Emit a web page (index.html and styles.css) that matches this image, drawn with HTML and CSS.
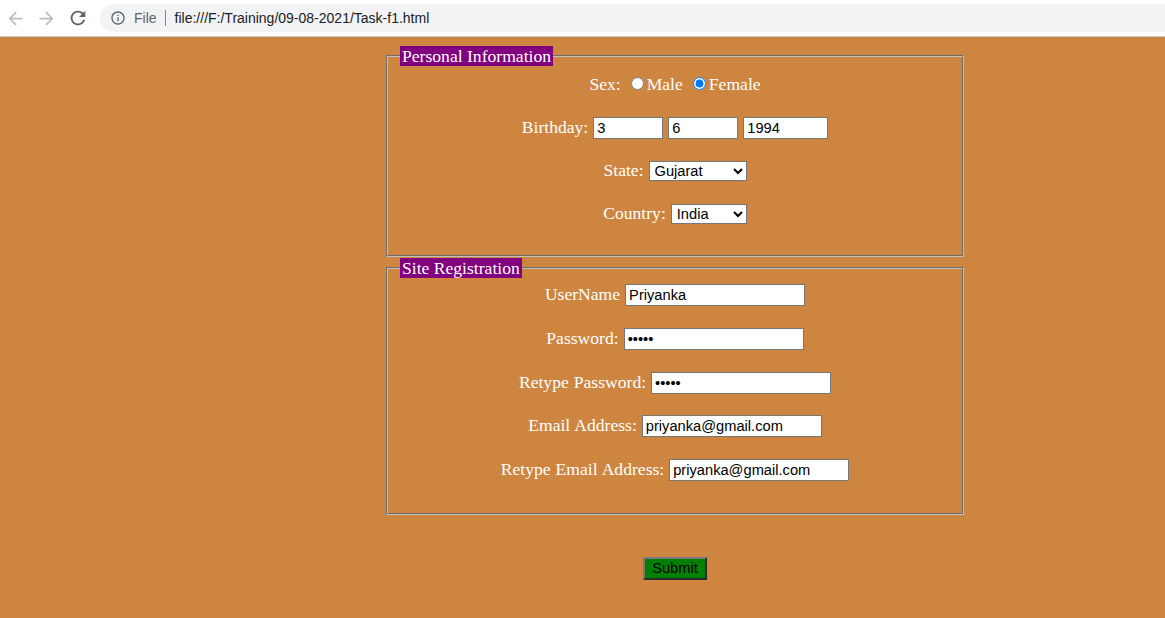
FILE: index.html
```html
<!DOCTYPE html>
<html lang="en">
<head>
<meta charset="utf-8">
<title>Task-f1</title>
<link rel="stylesheet" href="styles.css">
</head>
<body>
<header class="chrome">
  <nav class="nav">
    <span class="nav-btn disabled">
      <svg viewBox="0 0 24 24" width="21" height="21"><path d="M20 11H7.83l5.59-5.59L12 4l-8 8 8 8 1.41-1.41L7.83 13H20v-2z"/></svg>
    </span>
    <span class="nav-btn disabled">
      <svg viewBox="0 0 24 24" width="21" height="21"><path d="M4 11h12.17l-5.59-5.59L12 4l8 8-8 8-1.41-1.41L16.17 13H4v-2z"/></svg>
    </span>
    <span class="nav-btn">
      <svg viewBox="0 0 24 24" width="22" height="22"><path d="M17.65 6.35C16.2 4.9 14.21 4 12 4c-4.42 0-7.99 3.58-7.99 8s3.57 8 7.99 8c3.73 0 6.84-2.55 7.73-6h-2.08c-.82 2.33-3.04 4-5.65 4-3.31 0-6-2.69-6-6s2.69-6 6-6c1.66 0 3.14.69 4.22 1.78L13 11h7V4l-2.35 2.35z"/></svg>
    </span>
  </nav>
  <div class="omnibox">
    <svg class="info" viewBox="0 0 24 24" width="16" height="16"><path d="M11 7h2v2h-2zm0 4h2v6h-2zm1-9C6.48 2 2 6.48 2 12s4.48 10 10 10 10-4.48 10-10S17.52 2 12 2zm0 18c-4.41 0-8-3.59-8-8s3.59-8 8-8 8 3.59 8 8-3.59 8-8 8z"/></svg>
    <span class="scheme">File</span>
    <span class="sep"></span>
    <span class="url">file:///F:/Training/09-08-2021/Task-f1.html</span>
  </div>
</header>

<main class="page">
  <form class="form">
    <fieldset class="group">
      <legend class="caption">Personal Information</legend>
      <div class="rows rows-personal">
        <div class="row">Sex: <label><input type="radio" name="sex">Male</label> <label><input type="radio" name="sex" checked>Female</label></div>
        <div class="row">Birthday: <input class="field f-day" type="text" value="3"> <input class="field f-day" type="text" value="6"> <input class="field f-year" type="text" value="1994"></div>
        <div class="row">State: <select class="choice c-state"><option>Gujarat</option><option>Maharashtra</option></select></div>
        <div class="row">Country: <select class="choice c-country"><option>India</option><option>USA</option></select></div>
      </div>
    </fieldset>
    <fieldset class="group group-site">
      <legend class="caption">Site Registration</legend>
      <div class="rows rows-site">
        <div class="row">UserName <input class="field f-wide" type="text" value="Priyanka"></div>
        <div class="row">Password: <input class="field f-wide" type="password" value="12345"></div>
        <div class="row">Retype Password: <input class="field f-wide" type="password" value="12345"></div>
        <div class="row">Email Address: <input class="field f-wide" type="text" value="priyanka@gmail.com"></div>
        <div class="row">Retype Email Address: <input class="field f-wide" type="text" value="priyanka@gmail.com"></div>
      </div>
    </fieldset>
    <div class="actions">
      <button class="submit" type="button">Submit</button>
    </div>
  </form>
</main>
</body>
</html>
```

FILE: styles.css
```css
* { box-sizing: border-box; }

html, body {
  margin: 0;
  padding: 0;
  height: 100%;
}

body {
  background: #cd853f;
  font-family: "Liberation Serif", "Times New Roman", serif;
  overflow: hidden;
}

/* ---------- browser chrome ---------- */
.chrome {
  height: 37px;
  background: #ffffff;
  border-bottom: 1px solid #c9c9c9;
  display: flex;
  align-items: flex-start;
  padding-top: 4px;
}

.nav {
  display: flex;
  align-items: center;
  height: 28px;
  width: 100px;
}

.nav-btn {
  width: 31px;
  display: flex;
  align-items: center;
  justify-content: center;
  fill: #5f6368;
}
.nav-btn.disabled { fill: #bdbdbd; }

.omnibox {
  flex: 1;
  height: 28px;
  background: #f1f3f4;
  border-radius: 14px 0 0 14px;
  display: flex;
  align-items: center;
  padding-left: 10px;
  font-family: "Liberation Sans", Arial, sans-serif;
  font-size: 14px;
}

.info { fill: #5f6368; }

.scheme {
  color: #5f6368;
  margin-left: 8px;
}

.sep {
  width: 1px;
  height: 16px;
  background: #80868b;
  margin: 0 9px 0 8px;
}

.url { color: #202124; }

/* ---------- page ---------- */
.page {
  padding-top: 9px;
}

.form {
  width: 578px;
  margin-left: 386px;
}

.group {
  margin: 0;
  padding: 0 12px;
  border: 2px groove #c0c0c0;
  min-width: 0;
}
.group-site { margin-top: 1px; }

.caption {
  background: #800080;
  color: #ffffff;
  font-size: 17.6px;
  line-height: 20px;
  padding: 0 2px;
}

.rows {
  display: flex;
  flex-direction: column;
}
.rows-personal {
  gap: 17px;
  padding: 4.5px 0 29px;
}
.rows-site {
  gap: 17.75px;
  padding: 3.5px 0 30.5px;
}

.row {
  height: 26px;
  line-height: 26px;
  text-align: center;
  color: #ffffff;
  font-size: 17.6px;
  white-space: nowrap;
  word-spacing: 0.6px;
}

.row input[type="radio"] {
  width: 13px;
  height: 13px;
  margin: 3px 3px 0 5px;
}

.field {
  height: 22px;
  border: 1px solid #767676;
  border-radius: 0;
  padding: 1px 3px;
  background: #ffffff;
  color: #000000;
  font-family: "Liberation Sans", Arial, sans-serif;
  font-size: 14.67px;
  word-spacing: 0;
  vertical-align: baseline;
}

.f-day { width: 70px; }
.f-year { width: 85px; }
.f-wide { width: 180px; }

.choice {
  height: 20px;
  border: 1px solid #767676;
  border-radius: 0;
  background: #ffffff;
  color: #000000;
  font-family: "Liberation Sans", Arial, sans-serif;
  font-size: 14.67px;
  padding: 0 0 0 1px;
}
.c-state { width: 98px; }
.c-country { width: 76px; }

.actions {
  margin-top: 42px;
  display: flex;
  justify-content: center;
}

.submit {
  width: 64px;
  height: 23px;
  padding: 0;
  background: #008000;
  color: #000000;
  font-family: "Liberation Sans", Arial, sans-serif;
  font-size: 14.67px;
  border-width: 2px;
  border-style: solid;
  border-color: #7a7a7a #2b2b2b #2b2b2b #7a7a7a;
}
```
